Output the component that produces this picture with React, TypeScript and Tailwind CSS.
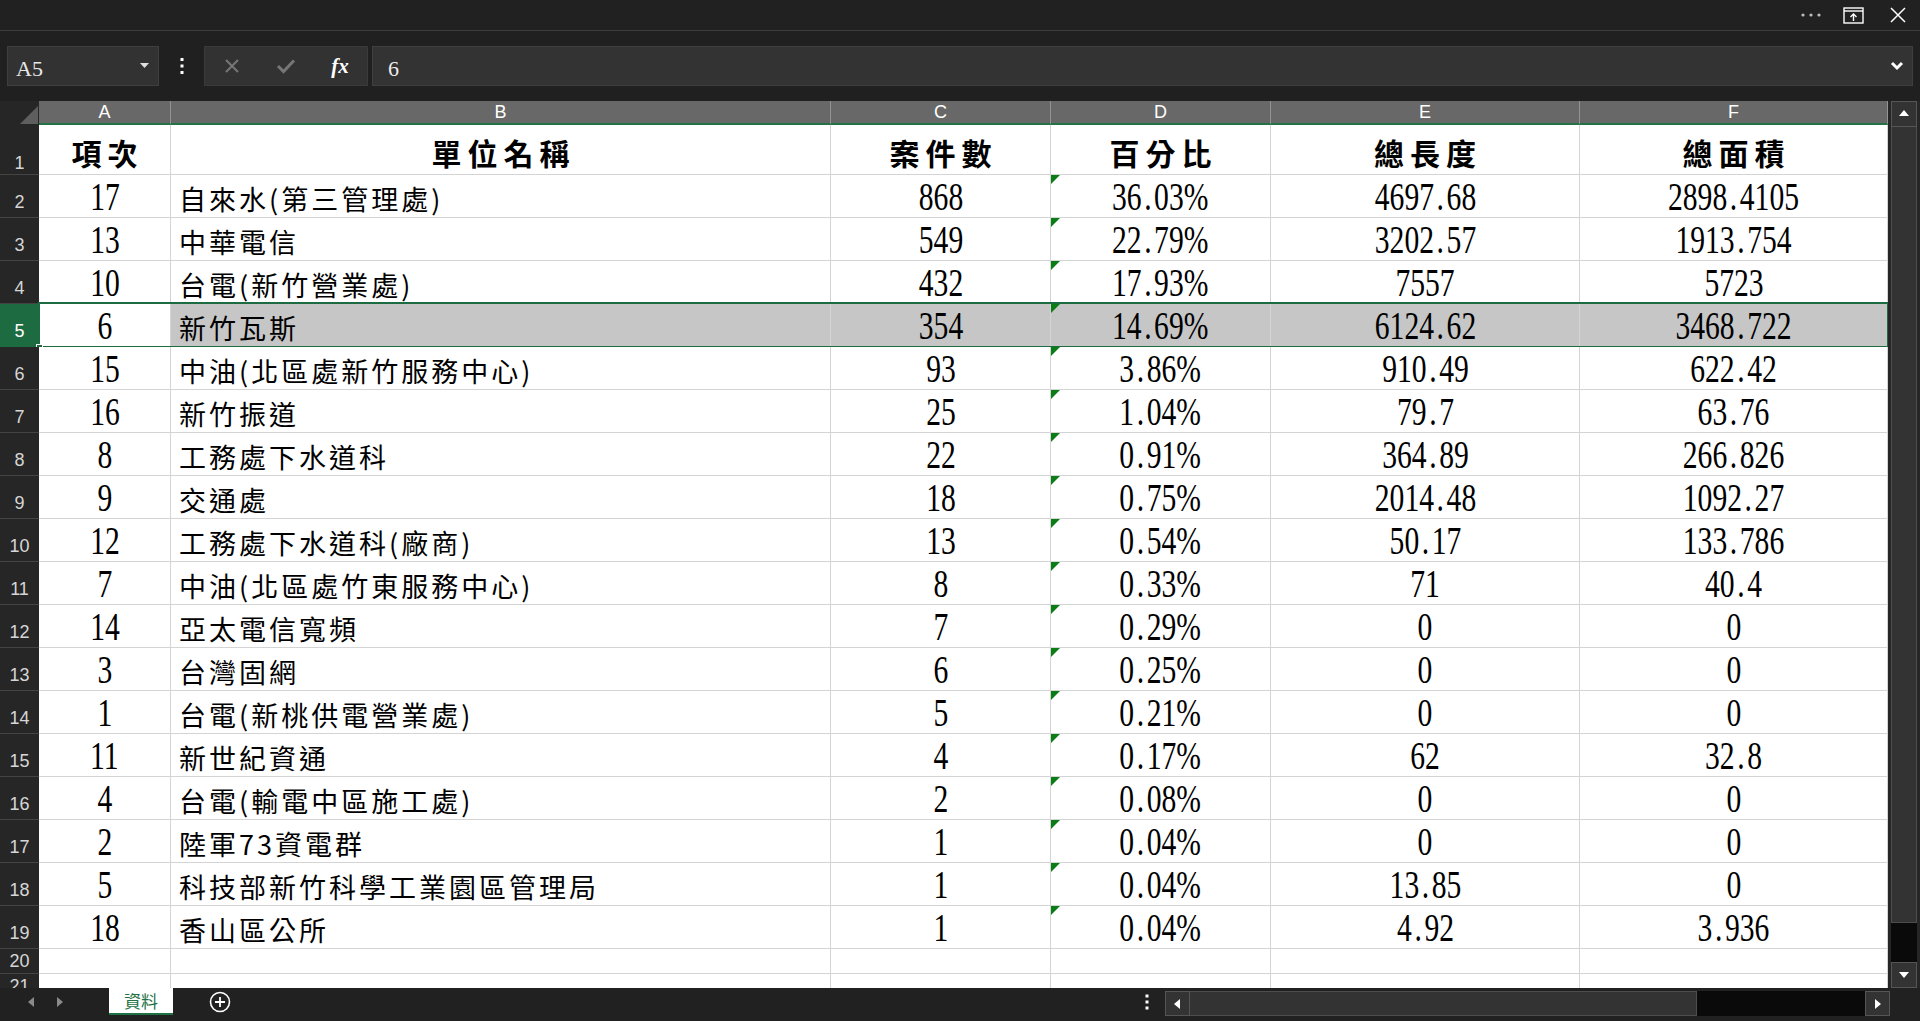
import React from "react";

type Row = [string, string, string, string, string, string];

const rows: Row[] = [
  ["17", "自來水(第三管理處)", "868", "36.03%", "4697.68", "2898.4105"],
  ["13", "中華電信", "549", "22.79%", "3202.57", "1913.754"],
  ["10", "台電(新竹營業處)", "432", "17.93%", "7557", "5723"],
  ["6", "新竹瓦斯", "354", "14.69%", "6124.62", "3468.722"],
  ["15", "中油(北區處新竹服務中心)", "93", "3.86%", "910.49", "622.42"],
  ["16", "新竹振道", "25", "1.04%", "79.7", "63.76"],
  ["8", "工務處下水道科", "22", "0.91%", "364.89", "266.826"],
  ["9", "交通處", "18", "0.75%", "2014.48", "1092.27"],
  ["12", "工務處下水道科(廠商)", "13", "0.54%", "50.17", "133.786"],
  ["7", "中油(北區處竹東服務中心)", "8", "0.33%", "71", "40.4"],
  ["14", "亞太電信寬頻", "7", "0.29%", "0", "0"],
  ["3", "台灣固網", "6", "0.25%", "0", "0"],
  ["1", "台電(新桃供電營業處)", "5", "0.21%", "0", "0"],
  ["11", "新世紀資通", "4", "0.17%", "62", "32.8"],
  ["4", "台電(輸電中區施工處)", "2", "0.08%", "0", "0"],
  ["2", "陸軍73資電群", "1", "0.04%", "0", "0"],
  ["5", "科技部新竹科學工業園區管理局", "1", "0.04%", "13.85", "0"],
  ["18", "香山區公所", "1", "0.04%", "4.92", "3.936"],
];

const colW = ["w-[132px]", "w-[660px]", "w-[220px]", "w-[220px]", "w-[309px]", "w-[308px]"];
const letters = ["A", "B", "C", "D", "E", "F"];
const headers = ["項次", "單位名稱", "案件數", "百分比", "總長度", "總面積"];

const cjk = "font-['Noto_Sans_CJK_TC',sans-serif]";
const num = "inline-block font-['Liberation_Serif',serif] text-[40px] leading-none scale-x-[0.74] text-black whitespace-nowrap";
const sans = "font-['Liberation_Sans',Arial,sans-serif]";

// 標楷體-like number: the period takes a half-width slot
function Num({ v }: { v: string }) {
  const parts = v.split(".");
  return (
    <span className={num}>
      {parts[0]}
      {parts.length > 1 && (
        <>
          <span className="inline-block w-[17px] text-center">.</span>
          {parts[1]}
        </>
      )}
    </span>
  );
}

function RowHead({ n, h, pb, active }: { n: number; h: string; pb: string; active?: boolean }) {
  return (
    <div
      className={`w-[39px] ${h} ${pb} shrink-0 flex items-end justify-center border-b ${sans} text-[18px] leading-none ${
        active ? "bg-[#1d6b40] border-[#1d6b40] text-white" : "bg-[#262626] border-[#444] text-[#d6d6d6]"
      }`}
    >
      {n}
    </div>
  );
}

function DataRow({ r, idx }: { r: Row; idx: number }) {
  const selected = idx === 5;
  return (
    <div className="relative flex h-[43px]">
      <RowHead n={idx} h="h-[43px]" pb="pb-[6px]" active={selected} />
      {r.map((v, i) => {
        const bg = selected && i > 0 ? "bg-[#c6c6c6]" : "bg-white";
        if (i === 1) {
          return (
            <div
              key={i}
              className={`${colW[i]} ${bg} shrink-0 flex items-end pl-[8px] pb-[5px] border-r border-b border-[#d4d4d4] ${cjk} text-[27px] tracking-[3px] leading-none text-black whitespace-nowrap overflow-hidden`}
            >
              {v}
            </div>
          );
        }
        return (
          <div
            key={i}
            className={`${colW[i]} ${bg} relative shrink-0 flex items-end justify-center border-r border-b border-[#d4d4d4]`}
          >
            {i === 3 && (
              <svg className="absolute left-0 top-0" width="9" height="9" viewBox="0 0 9 9">
                <polygon points="0,0 9,0 0,9" fill="#0a7d16" />
              </svg>
            )}
            <Num v={v} />
          </div>
        );
      })}
      {selected && (
        <div className="absolute left-[38px] top-[-2px] w-[1851px] h-[46px] border-2 border-[#1d6b40] pointer-events-none">
          <div className="absolute left-[-4px] bottom-[-5px] w-[7px] h-[7px] bg-[#1d6b40] border border-white" />
        </div>
      )}
    </div>
  );
}

function EmptyRow({ idx }: { idx: number }) {
  return (
    <div className="flex h-[25px] shrink-0">
      <RowHead n={idx} h="h-[25px]" pb="pb-[3px]" />
      {colW.map((w, i) => (
        <div key={i} className={`${w} shrink-0 bg-white border-r border-b border-[#d4d4d4]`} />
      ))}
    </div>
  );
}

function Tri({ dir, className }: { dir: "up" | "down" | "left" | "right"; className?: string }) {
  const pts = {
    up: "1,8 6,2 11,8",
    down: "1,3 6,9 11,3",
    left: "8,1 2,6 8,11",
    right: "3,1 9,6 3,11",
  }[dir];
  return (
    <svg width="12" height="12" viewBox="0 0 12 12" className={className}>
      <polygon points={pts} fill="currentColor" />
    </svg>
  );
}

export default function App() {
  return (
    <div className="w-[1920px] h-[1021px] bg-[#202020] overflow-hidden flex flex-col select-none">
      {/* title bar */}
      <div className="h-[31px] shrink-0 flex items-center justify-end pr-[14px] border-b border-[#3d3d3d] bg-[#212121]">
        <svg width="22" height="6" viewBox="0 0 22 6" className="text-[#bdbdbd]">
          <circle cx="3" cy="3" r="1.6" fill="currentColor" />
          <circle cx="11" cy="3" r="1.6" fill="currentColor" />
          <circle cx="19" cy="3" r="1.6" fill="currentColor" />
        </svg>
        <svg width="21" height="17" viewBox="0 0 21 17" className="ml-[21px] text-white">
          <rect x="1" y="1" width="19" height="15" fill="none" stroke="currentColor" strokeWidth="1.4" />
          <line x1="1" y1="4" x2="20" y2="4" stroke="currentColor" strokeWidth="1.4" />
          <line x1="10.5" y1="7" x2="10.5" y2="14" stroke="currentColor" strokeWidth="1.4" />
          <polyline points="7.5,10 10.5,7 13.5,10" fill="none" stroke="currentColor" strokeWidth="1.4" />
        </svg>
        <svg width="16" height="16" viewBox="0 0 16 16" className="ml-[26px] text-white">
          <path d="M1 1 L15 15 M15 1 L1 15" stroke="currentColor" strokeWidth="1.5" />
        </svg>
      </div>

      {/* formula bar */}
      <div className="h-[70px] shrink-0 flex items-center">
        <div className="ml-[7px] w-[152px] h-[40px] bg-[#323232] border border-[#3f3f3f] flex items-center justify-between pl-[8px] pr-[9px]">
          <span className="pt-[4px] font-['Liberation_Serif',serif] text-[22px] text-[#e8e8e8]">A5</span>
          <svg width="9" height="6" viewBox="0 0 9 6" className="text-[#e0e0e0]">
            <polygon points="0,0 9,0 4.5,5" fill="currentColor" />
          </svg>
        </div>
        <div className="w-[45px] flex justify-center">
          <svg width="4" height="18" viewBox="0 0 4 18" className="text-white">
            <rect x="0.5" y="1" width="3" height="3" fill="currentColor" />
            <rect x="0.5" y="7.5" width="3" height="3" fill="currentColor" />
            <rect x="0.5" y="14" width="3" height="3" fill="currentColor" />
          </svg>
        </div>
        <div className="w-[164px] h-[40px] bg-[#323232] border border-[#3a3a3a] flex items-center">
          <div className="w-[54px] flex justify-center">
            <svg width="16" height="16" viewBox="0 0 16 16" className="text-[#767676]">
              <path d="M2 2 L14 14 M14 2 L2 14" stroke="currentColor" strokeWidth="2" />
            </svg>
          </div>
          <div className="w-[54px] flex justify-center">
            <svg width="20" height="16" viewBox="0 0 20 16" className="text-[#767676]">
              <path d="M2 8 L7.5 13.5 L18 2.5" fill="none" stroke="currentColor" strokeWidth="3" />
            </svg>
          </div>
          <div className="w-[54px] flex justify-center">
            <span className="font-['Liberation_Serif',serif] italic font-bold text-[21px] text-white leading-none">
              fx
            </span>
          </div>
        </div>
        <div className="ml-[4px] mr-[7px] flex-1 h-[40px] bg-[#333333] border border-[#3f3f3f] flex items-center justify-between pl-[15px] pr-[8px]">
          <span className="pt-[4px] font-['Liberation_Serif',serif] text-[22px] text-[#ececec]">6</span>
          <svg width="14" height="10" viewBox="0 0 14 10" className="text-white">
            <path d="M2 2 L7 7 L12 2" fill="none" stroke="currentColor" strokeWidth="3" />
          </svg>
        </div>
      </div>

      {/* grid area */}
      <div className="h-[887px] shrink-0 flex">
        <div className="w-[1888px] shrink-0 flex flex-col overflow-hidden bg-white">
          {/* column headers */}
          <div className="flex h-[24px] shrink-0 bg-[#202020]">
            <div className="w-[39px] h-[24px] shrink-0 bg-[#262626] flex items-end justify-end pr-[1px] pb-[1px]">
              <svg width="18" height="18" viewBox="0 0 18 18">
                <polygon points="18,0 18,18 0,18" fill="#5e5e5e" />
              </svg>
            </div>
            {letters.map((l, i) => (
              <div
                key={l}
                className={`${colW[i]} shrink-0 h-[24px] bg-[#686868] border-r border-b-2 border-r-[#939393] border-b-[#217346] flex items-center justify-center ${sans} text-[18px] text-white leading-none`}
              >
                {l}
              </div>
            ))}
          </div>

          {/* row 1 headers */}
          <div className="flex h-[50px] shrink-0">
            <RowHead n={1} h="h-[50px]" pb="pb-[2px]" />
            {headers.map((t, i) => (
              <div
                key={t}
                className={`${colW[i]} shrink-0 bg-white flex items-end justify-center pb-[7px] pl-[6px] border-r border-b border-[#d4d4d4] ${cjk} text-[30px] font-bold tracking-[6px] leading-none text-black`}
              >
                {t}
              </div>
            ))}
          </div>

          {rows.map((r, i) => (
            <DataRow key={i} r={r} idx={i + 2} />
          ))}
          <EmptyRow idx={20} />
          <EmptyRow idx={21} />
        </div>

        {/* vertical scrollbar */}
        <div className="w-[32px] shrink-0 flex flex-col px-[3px] bg-[#262626]">
          <div className="h-[26px] shrink-0 bg-[#333] border border-[#555] flex items-center justify-center text-white">
            <Tri dir="up" />
          </div>
          <div className="h-[796px] shrink-0 bg-[#333] border-x border-b border-[#4d4d4d]" />
          <div className="flex-1 bg-[#0a0a0a]" />
          <div className="h-[26px] shrink-0 bg-[#333] border border-[#555] flex items-center justify-center text-white">
            <Tri dir="down" />
          </div>
        </div>
      </div>

      {/* sheet tabs */}
      <div className="h-[33px] shrink-0 flex items-start bg-[#212121]">
        <div className="w-[109px] h-[27px] flex items-center pl-[18px] text-[#8a8a8a]">
          <div className="w-[28px] flex justify-center">
            <Tri dir="left" />
          </div>
          <div className="w-[28px] flex justify-center">
            <Tri dir="right" />
          </div>
        </div>
        <div className={`w-[64px] h-[27px] bg-white border-b-2 border-[#1e7145] flex items-center justify-center ${cjk} text-[17px] text-[#1e7145]`}>
          資料
        </div>
        <div className="ml-[36px] h-[27px] flex items-center">
          <svg width="22" height="22" viewBox="0 0 22 22" className="text-white">
            <circle cx="11" cy="11" r="9.5" fill="none" stroke="currentColor" strokeWidth="1.6" />
            <path d="M11 6 V16 M6 11 H16" stroke="currentColor" strokeWidth="1.8" />
          </svg>
        </div>
        <div className="flex-1" />
        <div className="w-[18px] h-[27px] flex items-center justify-center">
          <svg width="4" height="16" viewBox="0 0 4 16" className="text-white">
            <rect x="0.5" y="0.5" width="3" height="3" fill="currentColor" />
            <rect x="0.5" y="6.5" width="3" height="3" fill="currentColor" />
            <rect x="0.5" y="12.5" width="3" height="3" fill="currentColor" />
          </svg>
        </div>
        <div className="ml-[9px] mt-[3px] w-[725px] h-[25px] flex">
          <div className="w-[25px] h-full bg-[#333] border border-[#555] flex items-center justify-center text-white">
            <Tri dir="left" />
          </div>
          <div className="w-[507px] h-full bg-[#333] border-y border-r border-[#4d4d4d]" />
          <div className="flex-1 h-full bg-[#0a0a0a]" />
          <div className="w-[25px] h-full bg-[#333] border border-[#555] flex items-center justify-center text-white">
            <Tri dir="right" />
          </div>
        </div>
        <div className="w-[30px]" />
      </div>
    </div>
  );
}
